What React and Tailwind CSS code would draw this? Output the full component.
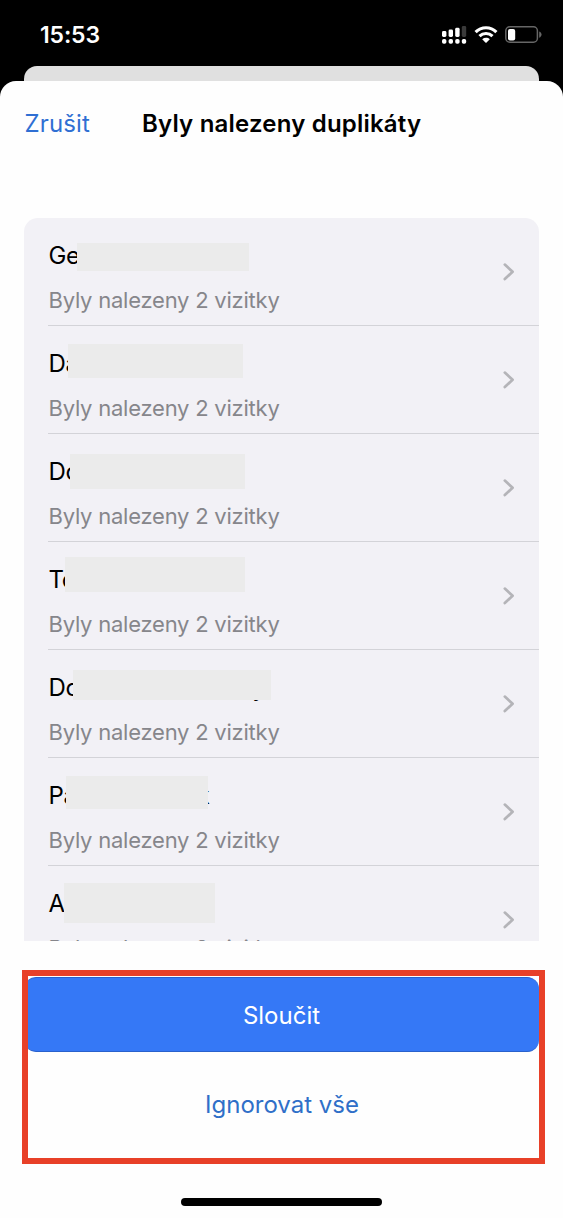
import React from "react";

const contacts = [
  { id: 1, name: "Ge", mask: "left-[53px] top-[25px] w-[172px] h-[28px]" },
  { id: 2, name: "Da", mask: "left-[44px] top-[18px] w-[175px] h-[34px]" },
  { id: 3, name: "Do", mask: "left-[46px] top-[20px] w-[175px] h-[35px]" },
  { id: 4, name: "To", mask: "left-[41px] top-[15px] w-[180px] h-[35px]" },
  {
    id: 5,
    name: "Do",
    end: "y",
    endPos: "ml-[173px]",
    mask: "left-[49px] top-[20px] w-[198px] h-[30px]",
  },
  {
    id: 6,
    name: "Pa",
    end: "k",
    endPos: "ml-[120px]",
    mask: "left-[42px] top-[18px] w-[142px] h-[33px]",
  },
  { id: 7, name: "A", mask: "left-[40px] top-[17px] w-[151px] h-[40px]" },
];

const StatusBar = () => {
  return (
    <div className="flex h-[66px] shrink-0 items-start justify-between pl-10 pr-[21px] pt-[21px]">
      <span className="text-[23px] font-semibold leading-7 tracking-[-0.15px] text-white">
        15:53
      </span>
      <svg width="102" height="24" viewBox="440 21 102 24" fill="none">
        {/* dual sim signal */}
        <g fill="#fff">
          <rect x="442" y="31" width="4.4" height="6" rx="1.4" />
          <rect x="448.6" y="29.6" width="4.4" height="7.4" rx="1.4" />
          <rect x="455.2" y="27.8" width="4.4" height="9.2" rx="1.4" />
          <rect x="461.8" y="26" width="4.4" height="11" rx="1.4" fill="#3a3a3a" />
          <rect x="442" y="39" width="4.4" height="4.8" rx="1.8" />
          <rect x="448.6" y="39" width="4.4" height="4.8" rx="1.8" />
          <rect x="455.2" y="39" width="4.4" height="4.8" rx="1.8" />
          <rect x="461.8" y="39" width="4.4" height="4.8" rx="1.8" />
        </g>
        {/* wifi */}
        <g stroke="#fff" strokeWidth="3.1">
          <path d="M475.6 32.2C481.4 26.2 490.6 26.2 496.4 32.2" />
          <path d="M479.5 36.2C483.2 32.6 488.8 32.6 492.5 36.2" />
        </g>
        <path
          d="M482.2 39.2C484.4 37.4 487.6 37.4 489.8 39.2L486.6 42.4Q486 43 485.4 42.4Z"
          fill="#fff"
        />
        {/* battery */}
        <rect
          x="505.8"
          y="26.8"
          width="31.6"
          height="15.4"
          rx="4"
          stroke="#666"
          strokeWidth="1.5"
        />
        <rect x="508" y="29" width="7.2" height="11.4" rx="2" fill="#fff" />
        <path d="M539.2 31.4C542.3 32.6 542.3 36.6 539.2 37.8Z" fill="#666" />
      </svg>
    </div>
  );
};

const ContactRow = ({ contact, last }) => {
  return (
    <li className="relative flex h-[108px] shrink-0 pl-6">
      <div
        className={
          last
            ? "flex flex-1 items-center justify-between"
            : "flex flex-1 items-center justify-between border-b border-[#d3d3d8]"
        }
      >
        <div className="h-full pl-[0.5px] pt-[22px]">
          <p className="flex whitespace-nowrap text-[24px] leading-8 tracking-[-0.4px] text-black">
            {contact.name}
            {contact.end && (
              <span className={contact.endPos}>{contact.end}</span>
            )}
          </p>
          <p className="mt-[13px] whitespace-nowrap text-[22px] leading-[30px] tracking-[-0.23px] text-[#86868b]">
            Byly nalezeny 2 vizitky
          </p>
        </div>
        <svg
          width="12"
          height="18"
          viewBox="0 0 12 18"
          fill="none"
          className="mr-6"
        >
          <path
            d="M1.8 1.6L9.6 8.8L1.8 16"
            stroke="#b4b4b8"
            strokeWidth="2.7"
            strokeLinecap="round"
            strokeLinejoin="round"
          />
        </svg>
      </div>
      <div className={`absolute bg-[#ebebeb] ${contact.mask}`} />
    </li>
  );
};

const App = () => {
  return (
    <div className="flex h-[1218px] w-[563px] flex-col overflow-hidden bg-black font-['Inter',sans-serif]">
      <StatusBar />
      <div className="mx-6 h-[15px] shrink-0 rounded-t-[13px] bg-[#e0e0e0]" />
      <div className="flex flex-1 flex-col rounded-t-[16px] bg-[#fefefe]">
        <header className="grid h-[137px] shrink-0 grid-cols-[118px_1fr] items-start pl-6 pt-[27px] leading-8">
          <button className="pl-[0.5px] text-left text-[24px] tracking-[0.15px] text-[#2f6fd3]">
            Zrušit
          </button>
          <h1 className="whitespace-nowrap text-[24px] font-semibold tracking-[0.2px] text-black">
            Byly nalezeny duplikáty
          </h1>
        </header>

        <ul className="mx-6 flex h-[723px] shrink-0 flex-col overflow-hidden rounded-t-[14px] bg-[#f2f1f6]">
          {contacts.map((contact, index) => (
            <ContactRow
              key={contact.id}
              contact={contact}
              last={index === contacts.length - 1}
            />
          ))}
        </ul>

        {/* highlighted actions */}
        <div className="ml-[22px] mt-[29px] flex h-[194px] w-[523px] shrink-0 flex-col overflow-hidden border-6 border-[#e84028] pt-px text-[24px]">
          <button className="-ml-1 h-[75px] w-[515px] shrink-0 rounded-[12px] border-y border-[#2961cc] bg-[#3578f6] pt-0.5 text-white">
            Sloučit
          </button>
          <button className="mt-[37px] w-[508px] leading-8 text-[#2f6fc8]">
            Ignorovat vše
          </button>
        </div>

        <div className="mx-auto mt-[34px] h-[8px] w-[201px] shrink-0 rounded-full bg-black" />
      </div>
    </div>
  );
};

export default App;
